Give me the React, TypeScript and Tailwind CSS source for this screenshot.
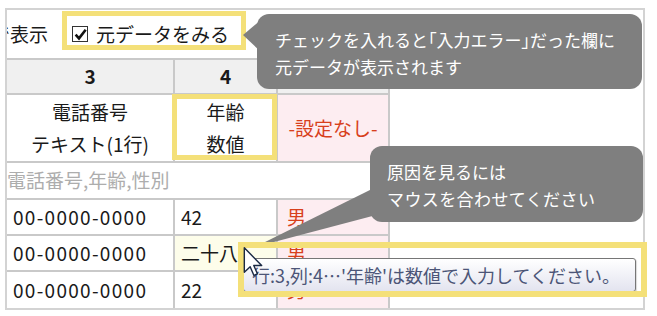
const font = "font-['Meiryo','Noto_Sans_CJK_JP',sans-serif]";

function Cell({
  w,
  className = "",
  children,
}: {
  w: string;
  className?: string;
  children?: React.ReactNode;
}) {
  return (
    <div className={`${w} shrink-0 border-r-2 border-[#c9c9c9] ${className}`}>
      {children}
    </div>
  );
}

const rows = [
  { tel: "00-0000-0000", age: "42", sex: "男", bad: false },
  { tel: "00-0000-0000", age: "二十八", sex: "男", bad: true },
  { tel: "00-0000-0000", age: "22", sex: "男", bad: false },
];

export default function App() {
  return (
    <div
      className={`relative h-[316px] w-[657px] overflow-hidden bg-white text-[19px] text-[#1a1a1a] ${font}`}
    >
      <div className="ml-[5px] mt-[8px] h-[302px] w-[640px] overflow-hidden border-2 border-[#d3d3d3]">
        {/* top bar */}
        <div className="flex h-[48px] items-center">
          <span className="-ml-[16px] whitespace-nowrap">で表示</span>
          <span className="ml-[24px] flex h-[16px] w-[16px] items-center justify-center border-[1.5px] border-[#333] bg-white">
            <svg viewBox="0 0 12 12" className="h-[13px] w-[13px]">
              <path
                d="M1.5 6.2 L4.6 9.6 L10.8 1.6"
                fill="none"
                stroke="#111"
                strokeWidth="2.4"
              />
            </svg>
          </span>
          <span className="ml-[8px] whitespace-nowrap">元データをみる</span>
        </div>

        {/* table */}
        <div className="w-[383px] border-t-2 border-[#c9c9c9]">
          <div className="flex h-[35px] border-b-2 border-[#c9c9c9] bg-[#f0f0f0] font-bold">
            <Cell w="w-[168px]" className="flex items-center justify-center">
              3
            </Cell>
            <Cell w="w-[103px]" className="flex items-center justify-center">
              4
            </Cell>
            <Cell w="w-[112px]" />
          </div>
          <div className="flex h-[68px] border-b-2 border-[#c9c9c9]">
            <Cell
              w="w-[168px]"
              className="flex flex-col items-center justify-center leading-[32px]"
            >
              <span>電話番号</span>
              <span>テキスト(1行)</span>
            </Cell>
            <Cell
              w="w-[103px]"
              className="flex flex-col items-center justify-center leading-[32px]"
            >
              <span>年齢</span>
              <span>数値</span>
            </Cell>
            <Cell
              w="w-[112px]"
              className="flex items-center justify-center whitespace-nowrap bg-[#fdedf1] text-[#d8401c]"
            >
              -設定なし-
            </Cell>
          </div>
          <div className="flex h-[37px] items-center border-b-2 border-[#c9c9c9] whitespace-nowrap text-[#adadad]">
            電話番号,年齢,性別
          </div>
          {rows.map((r, i) => (
            <div
              key={i}
              className={`flex h-[36px] ${i < rows.length - 1 ? "border-b-2 border-[#c9c9c9]" : ""}`}
            >
              <Cell w="w-[168px]" className="flex items-center pl-[6px] tracking-[1.3px]">
                {r.tel}
              </Cell>
              <Cell
                w="w-[103px]"
                className={`flex items-center pl-[6px] ${r.bad ? "bg-[#fdfdea]" : ""}`}
              >
                {r.age}
              </Cell>
              <Cell
                w="w-[112px]"
                className="flex items-center bg-[#fdedf1] pl-[9px] text-[#d8401c]"
              >
                {r.sex}
              </Cell>
            </div>
          ))}
        </div>
      </div>

      {/* yellow highlight frames */}
      <div className="absolute left-[62px] top-[11px] h-[39px] w-[184px] border-[5px] border-[#f4e079]" />
      <div className="absolute left-[172px] top-[94px] h-[66px] w-[105px] border-[5px] border-[#f4e079]" />

      {/* callout pointers */}
      <svg className="absolute left-0 top-0" width="657" height="316">
        <polygon points="243,35 262,19 262,53" fill="#7f7f7f" />
        <polygon points="255,247 374,188 380,214" fill="#7f7f7f" />
      </svg>

      {/* callout 1 */}
      <div className="absolute left-[257px] top-[14px] h-[75px] w-[385px] rounded-[12px] bg-[#7f7f7f] pl-[18px] pt-[12px] text-[17px] leading-[27px] whitespace-nowrap text-white">
        <div>
          チェックを入れると
          <span className="[font-feature-settings:'palt']">「</span>
          入力エラー
          <span className="[font-feature-settings:'palt']">」</span>
          だった欄に
        </div>
        <div>元データが表示されます</div>
      </div>

      {/* callout 2 */}
      <div className="absolute left-[370px] top-[146px] h-[76px] w-[273px] rounded-[12px] bg-[#7f7f7f] pl-[17px] pt-[12px] text-[17px] leading-[27px] whitespace-nowrap text-white">
        <div>原因を見るには</div>
        <div className="tracking-[0.4px]">マウスを合わせてください</div>
      </div>

      {/* tooltip */}
      <div className="absolute left-[243px] top-[258px] flex h-[34px] w-[393px] items-center rounded-[3px] border border-[#767676] bg-gradient-to-b from-white to-[#e3e4ef] pl-[8px] text-[18px] whitespace-nowrap text-[#4c5577] shadow-[1px_1px_1px_rgba(0,0,0,0.15)]">
        行:3,列:4…'年齢'は数値で入力してください。
      </div>
      <div className="absolute left-[238px] top-[242px] h-[55px] w-[409px] border-[6px] border-[#f4e079]" />

      {/* mouse cursor */}
      <svg
        className="absolute left-[243px] top-[247px]"
        width="20"
        height="30"
        viewBox="0 0 12 19"
      >
        <path
          d="M0.5 0.5 L0.5 16 L4.2 12.5 L6.6 18 L8.8 17 L6.5 11.7 L11.5 11.7 Z"
          fill="white"
          stroke="#1b2a44"
          strokeWidth="0.9"
          strokeLinejoin="round"
        />
      </svg>
    </div>
  );
}
